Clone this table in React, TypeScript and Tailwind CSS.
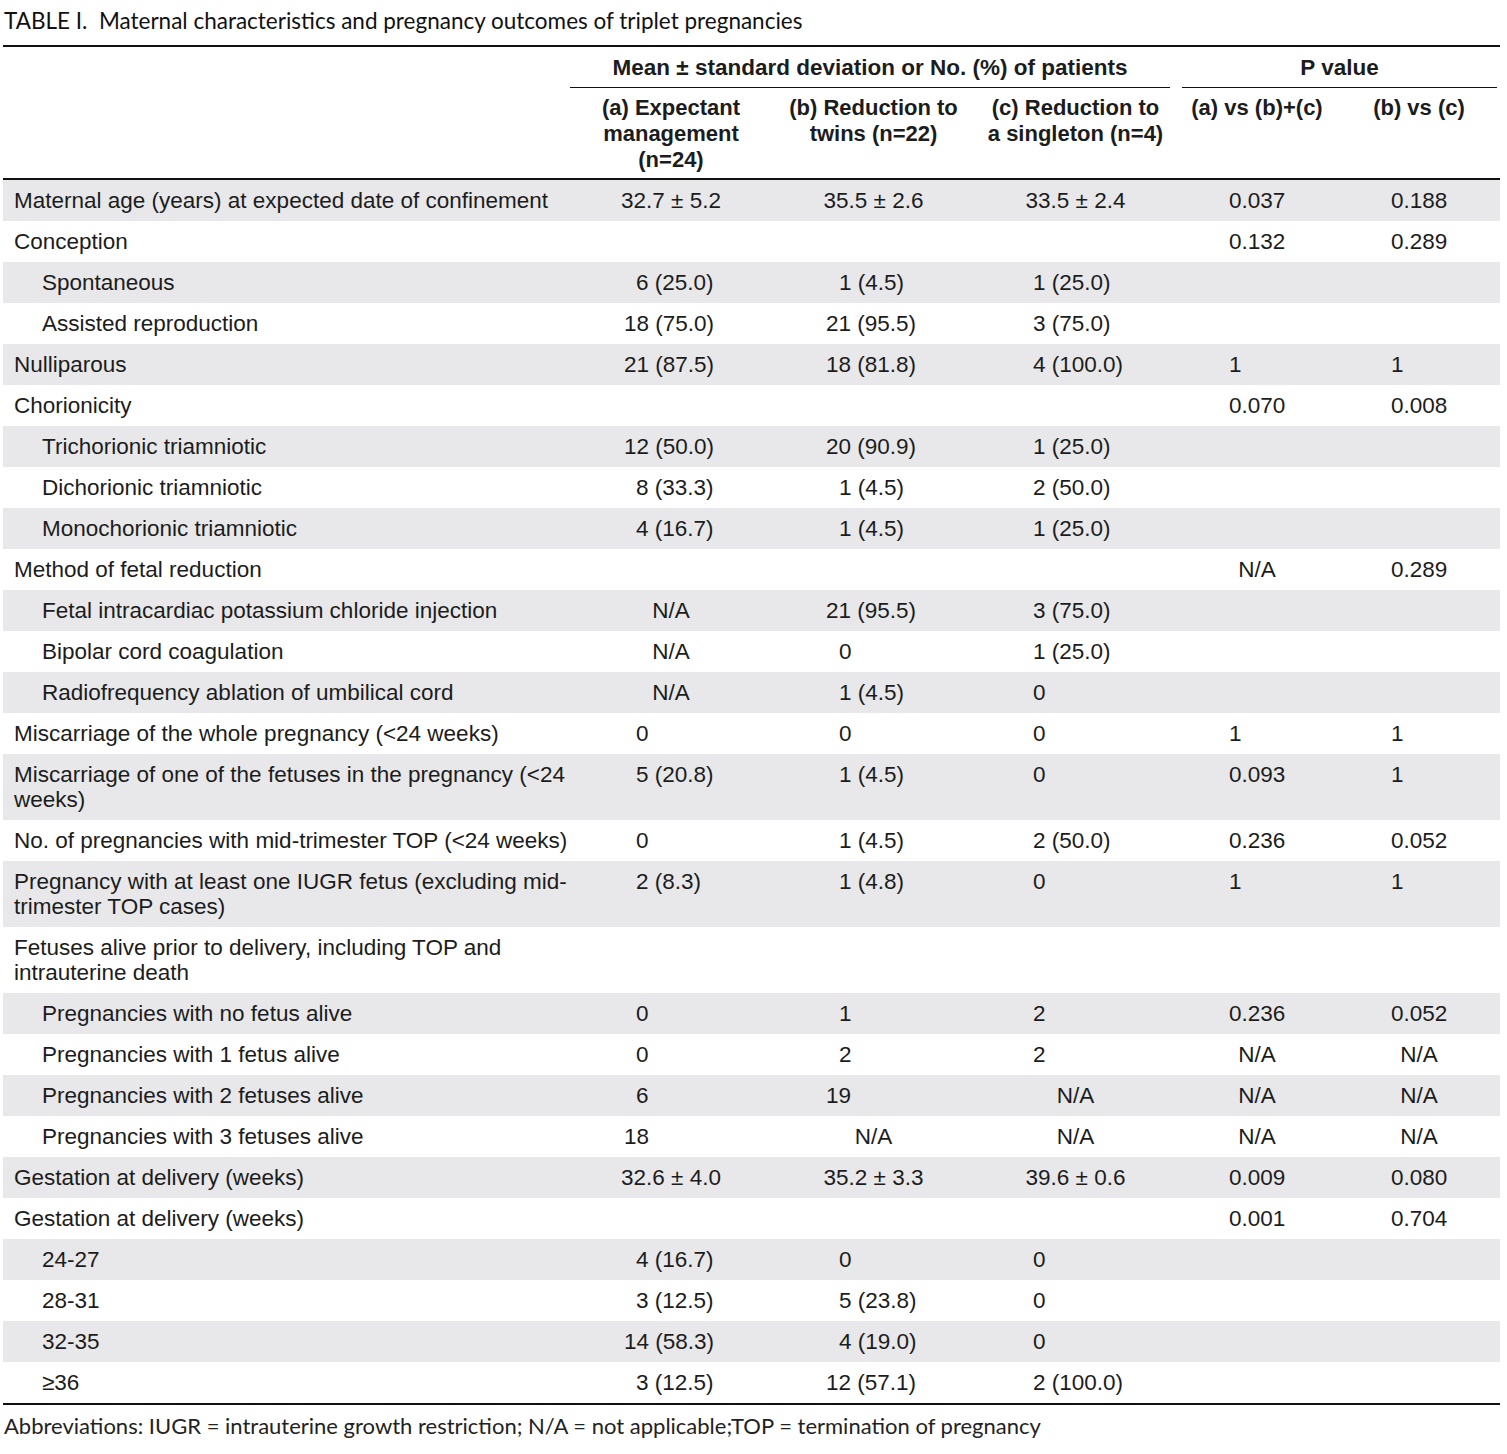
type Row = {
  label: string;
  sub?: boolean;
  v: string[];
};

const rows: Row[] = [
  { label: "Maternal age (years) at expected date of confinement", v: ["32.7 ± 5.2", "35.5 ± 2.6", "33.5 ± 2.4", "0.037", "0.188"] },
  { label: "Conception", v: ["", "", "", "0.132", "0.289"] },
  { label: "Spontaneous", sub: true, v: ["6 (25.0)", "1 (4.5)", "1 (25.0)", "", ""] },
  { label: "Assisted reproduction", sub: true, v: ["18 (75.0)", "21 (95.5)", "3 (75.0)", "", ""] },
  { label: "Nulliparous", v: ["21 (87.5)", "18 (81.8)", "4 (100.0)", "1", "1"] },
  { label: "Chorionicity", v: ["", "", "", "0.070", "0.008"] },
  { label: "Trichorionic triamniotic", sub: true, v: ["12 (50.0)", "20 (90.9)", "1 (25.0)", "", ""] },
  { label: "Dichorionic triamniotic", sub: true, v: ["8 (33.3)", "1 (4.5)", "2 (50.0)", "", ""] },
  { label: "Monochorionic triamniotic", sub: true, v: ["4 (16.7)", "1 (4.5)", "1 (25.0)", "", ""] },
  { label: "Method of fetal reduction", v: ["", "", "", "N/A", "0.289"] },
  { label: "Fetal intracardiac potassium chloride injection", sub: true, v: ["N/A", "21 (95.5)", "3 (75.0)", "", ""] },
  { label: "Bipolar cord coagulation", sub: true, v: ["N/A", "0", "1 (25.0)", "", ""] },
  { label: "Radiofrequency ablation of umbilical cord", sub: true, v: ["N/A", "1 (4.5)", "0", "", ""] },
  { label: "Miscarriage of the whole pregnancy (<24 weeks)", v: ["0", "0", "0", "1", "1"] },
  { label: "Miscarriage of one of the fetuses in the pregnancy (<24\nweeks)", v: ["5 (20.8)", "1 (4.5)", "0", "0.093", "1"] },
  { label: "No. of pregnancies with mid-trimester TOP (<24 weeks)", v: ["0", "1 (4.5)", "2 (50.0)", "0.236", "0.052"] },
  { label: "Pregnancy with at least one IUGR fetus (excluding mid-\ntrimester TOP cases)", v: ["2 (8.3)", "1 (4.8)", "0", "1", "1"] },
  { label: "Fetuses alive prior to delivery, including TOP and\nintrauterine death", v: ["", "", "", "", ""] },
  { label: "Pregnancies with no fetus alive", sub: true, v: ["0", "1", "2", "0.236", "0.052"] },
  { label: "Pregnancies with 1 fetus alive", sub: true, v: ["0", "2", "2", "N/A", "N/A"] },
  { label: "Pregnancies with 2 fetuses alive", sub: true, v: ["6", "19", "N/A", "N/A", "N/A"] },
  { label: "Pregnancies with 3 fetuses alive", sub: true, v: ["18", "N/A", "N/A", "N/A", "N/A"] },
  { label: "Gestation at delivery (weeks)", v: ["32.6 ± 4.0", "35.2 ± 3.3", "39.6 ± 0.6", "0.009", "0.080"] },
  { label: "Gestation at delivery (weeks)", v: ["", "", "", "0.001", "0.704"] },
  { label: "24-27", sub: true, v: ["4 (16.7)", "0", "0", "", ""] },
  { label: "28-31", sub: true, v: ["3 (12.5)", "5 (23.8)", "0", "", ""] },
  { label: "32-35", sub: true, v: ["14 (58.3)", "4 (19.0)", "0", "", ""] },
  { label: "≥36", sub: true, v: ["3 (12.5)", "12 (57.1)", "2 (100.0)", "", ""] },
];

const twoDigits = (s: string) => /^\d\d/.test(s);

// most numbers sit on a fixed left edge per column; ± values and N/A are centred
const cellClass = (col: number, val: string) => {
  if (val.includes("±") || val === "N/A") return "text-center";
  if (col === 0) return twoDigits(val) ? "pl-[54px]" : "pl-[66px]";
  if (col === 1) return twoDigits(val) ? "pl-[54px]" : "pl-[67px]";
  if (col === 2) return "pl-[58px]";
  return "pl-[53px]";
};

const grid = "grid grid-cols-[567px_202px_203px_201px_162px_162px]";

export default function App() {
  return (
    <div className="w-[1507px] h-[1454px] bg-white text-[#1c1c1c] font-['Liberation_Sans',Arial,sans-serif]">
      <div className="h-[45px] pl-[4px] pt-[6px] text-[22.5px] leading-[29px] font-['Lato',sans-serif] text-[#111]">
        TABLE I.&nbsp; Maternal characteristics and pregnancy outcomes of triplet pregnancies
      </div>

      <div className="ml-[3px] w-[1497px] border-t-2 border-[#111]">
        {/* header */}
        <div className={`${grid} text-[22.5px] leading-[26px] font-bold`}>
          <div />
          <div className="col-span-3 mr-[6px] border-b border-[#111] pt-[8px] pb-[6px] text-center">
            Mean ± standard deviation or No. (%) of patients
          </div>
          <div className="col-span-2 ml-[6px] mr-[3px] border-b border-[#111] pt-[8px] pb-[6px] text-center">
            P value
          </div>
        </div>
        <div className={`${grid} h-[92px] border-b-2 border-[#111] pt-[7px] text-[22px] leading-[26px] font-bold text-center`}>
          <div />
          <div>(a) Expectant<br />management<br />(n=24)</div>
          <div>(b) Reduction to<br />twins (n=22)</div>
          <div>(c) Reduction to<br />a singleton (n=4)</div>
          <div>(a) vs (b)+(c)</div>
          <div>(b) vs (c)</div>
        </div>

        {/* body */}
        <div className="border-b-2 border-[#111]">
          {rows.map((r, i) => (
            <div
              key={i}
              className={`${grid} py-[8px] text-[22.5px] leading-[25px] ${i % 2 === 0 ? "bg-[#e8e8ea]" : "bg-white"}`}
            >
              <div className={`whitespace-pre-line ${r.sub ? "pl-[39px]" : "pl-[11px]"}`}>{r.label}</div>
              {r.v.map((val, c) => (
                <div key={c} className={val ? cellClass(c, val) : ""}>
                  {val}
                </div>
              ))}
            </div>
          ))}
        </div>
      </div>

      <div className="pl-[4px] pt-[6px] text-[22px] leading-[30px] font-['Lato',sans-serif] text-[#222]">
        Abbreviations: IUGR = intrauterine growth restriction; N/A = not applicable;TOP = termination of pregnancy
      </div>
    </div>
  );
}
